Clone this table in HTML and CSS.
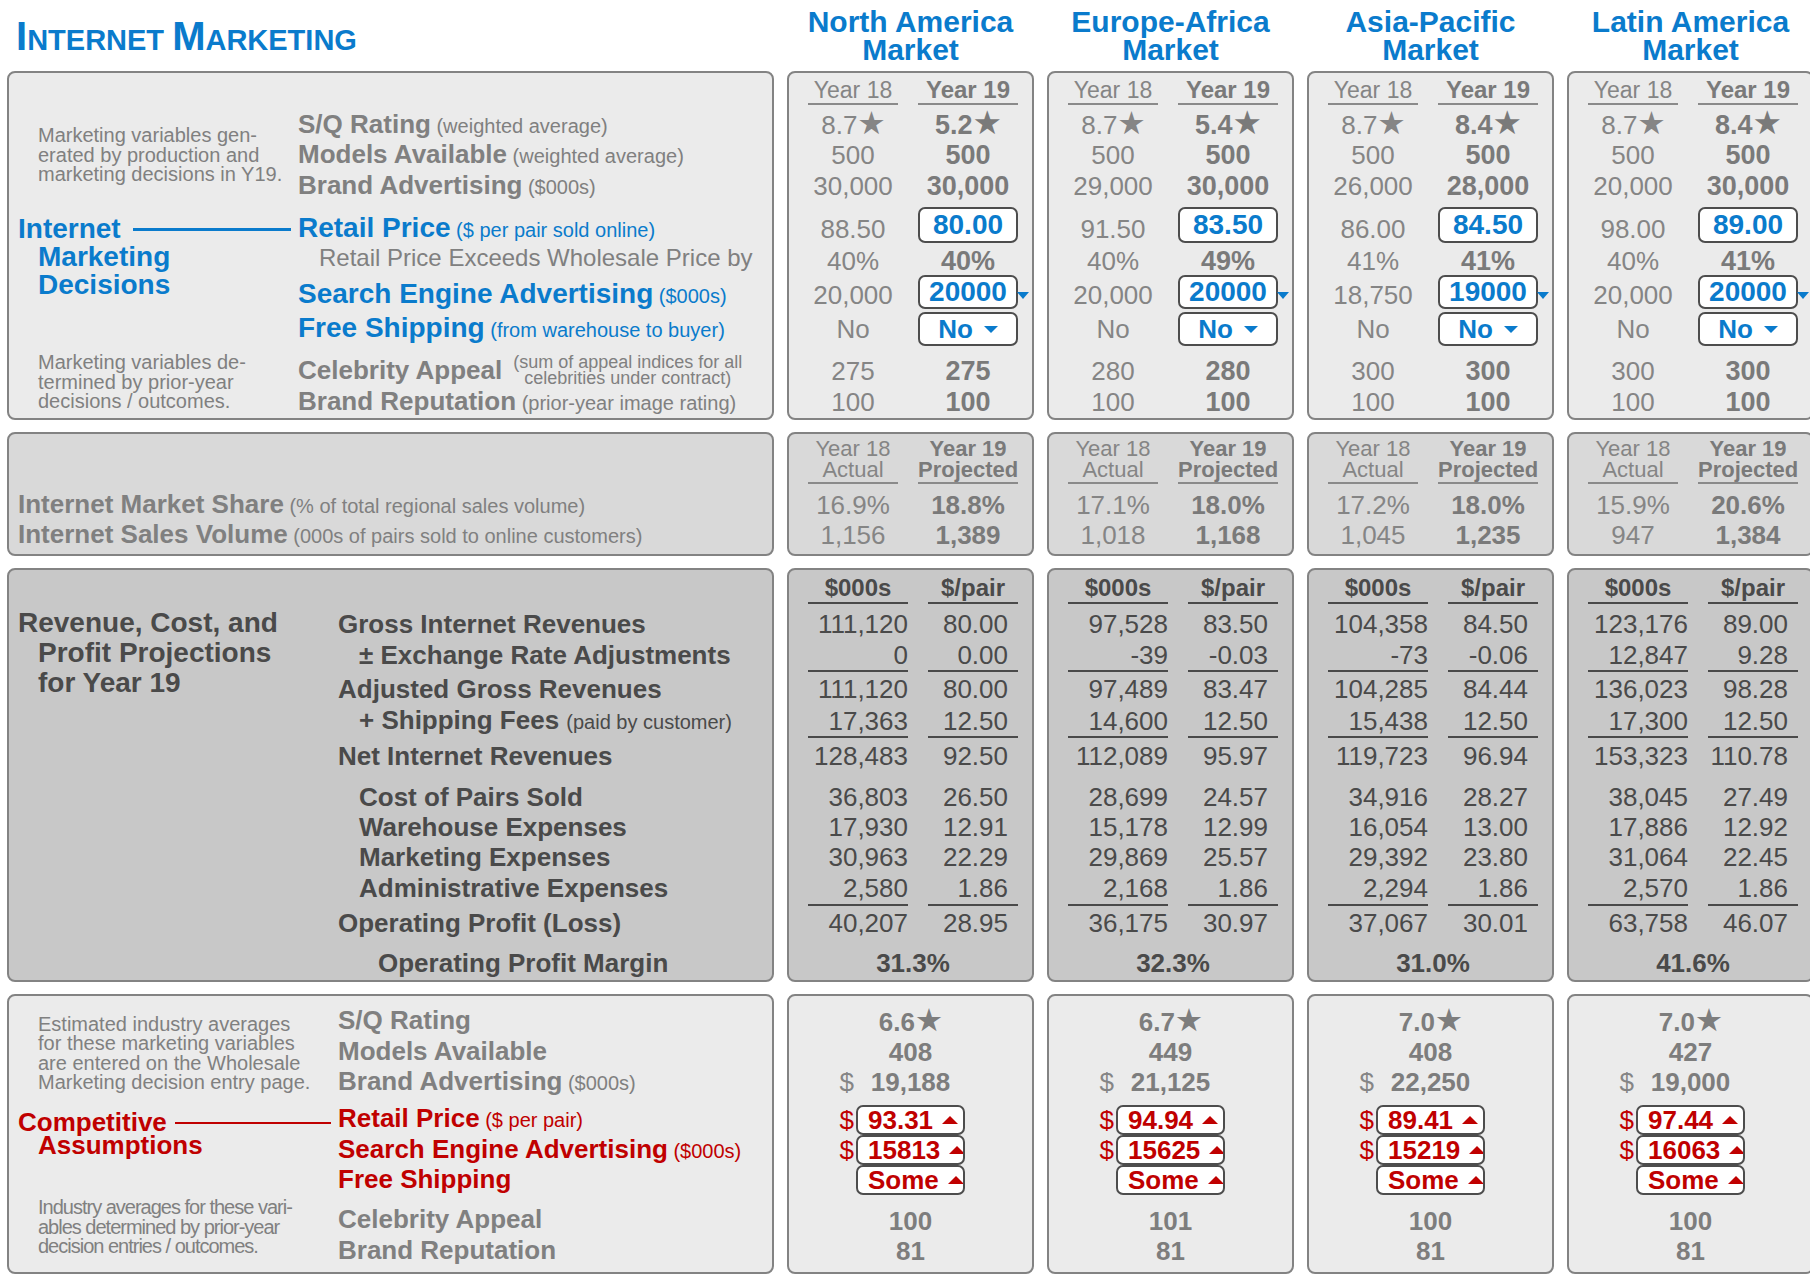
FILE: index.html
```html
<!DOCTYPE html>
<html lang="en">
<head>
<meta charset="utf-8">
<title>Internet Marketing</title>
<link rel="stylesheet" href="styles.css">
</head>
<body>
<div class="page">
  <div class="title"><span class="cap">I</span>NTERNET <span class="cap">M</span>ARKETING</div>
  <div class="mtitle">North America<br>Market</div>
  <div class="mtitle">Europe-Africa<br>Market</div>
  <div class="mtitle">Asia-Pacific<br>Market</div>
  <div class="mtitle">Latin America<br>Market</div>

  <!-- ===== Decisions panel ===== -->
  <div class="panel light dec left">
    <div class="desc dec-d1">Marketing variables gen-<br>erated by production and<br>marketing decisions in Y19.</div>
    <div class="head blue dec-h"><div class="hl"><span>Internet</span><i class="rule"></i></div><div class="ind">Marketing</div><div class="ind">Decisions</div></div>
    <div class="desc dec-d2">Marketing variables de-<br>termined by prior-year<br>decisions / outcomes.</div>
    <div class="lab gc2 gr2"><b>S/Q Rating</b> (weighted average)</div>
    <div class="lab gc2 gr3"><b>Models Available</b> (weighted average)</div>
    <div class="lab gc2 gr4"><b>Brand Advertising</b> ($000s)</div>
    <div class="lab blue gc2 gr5 dn4"><b>Retail Price</b> ($ per pair sold online)</div>
    <div class="lab plain gc2 gr6 up3">Retail Price Exceeds Wholesale Price by</div>
    <div class="lab blue gc2 gr7 dn3"><b>Search Engine Advertising</b> ($000s)</div>
    <div class="lab blue gc2 gr8"><b>Free Shipping</b> (from warehouse to buyer)</div>
    <div class="lab celeb gc2 gr9"><b>Celebrity Appeal</b><span class="note">(sum of appeal indices for all<br>celebrities under contract)</span></div>
    <div class="lab gc2 gr10"><b>Brand Reputation</b> (prior-year image rating)</div>
  </div>

  <div class="panel light dec mk">
    <div class="hd">Year 18</div><div class="hd hb">Year 19</div>
    <div class="c">8.7<span class="st">★</span></div><div class="c cb">5.2<span class="st">★</span></div>
    <div class="c">500</div><div class="c cb">500</div>
    <div class="c">30,000</div><div class="c cb">30,000</div>
    <div class="c dn4">88.50</div><div class="c"><div class="inbox">80.00</div></div>
    <div class="c">40%</div><div class="c cb">40%</div>
    <div class="c dn3">20,000</div><div class="c"><div class="inbox h34">20000<i class="dtri out"></i></div></div>
    <div class="c">No</div><div class="c"><div class="inbox h34 no">No<i class="dtri"></i></div></div>
    <div class="c end">275</div><div class="c cb end">275</div>
    <div class="c">100</div><div class="c cb">100</div>
  </div>

  <div class="panel light dec mk">
    <div class="hd">Year 18</div><div class="hd hb">Year 19</div>
    <div class="c">8.7<span class="st">★</span></div><div class="c cb">5.4<span class="st">★</span></div>
    <div class="c">500</div><div class="c cb">500</div>
    <div class="c">29,000</div><div class="c cb">30,000</div>
    <div class="c dn4">91.50</div><div class="c"><div class="inbox">83.50</div></div>
    <div class="c">40%</div><div class="c cb">49%</div>
    <div class="c dn3">20,000</div><div class="c"><div class="inbox h34">20000<i class="dtri out"></i></div></div>
    <div class="c">No</div><div class="c"><div class="inbox h34 no">No<i class="dtri"></i></div></div>
    <div class="c end">280</div><div class="c cb end">280</div>
    <div class="c">100</div><div class="c cb">100</div>
  </div>

  <div class="panel light dec mk">
    <div class="hd">Year 18</div><div class="hd hb">Year 19</div>
    <div class="c">8.7<span class="st">★</span></div><div class="c cb">8.4<span class="st">★</span></div>
    <div class="c">500</div><div class="c cb">500</div>
    <div class="c">26,000</div><div class="c cb">28,000</div>
    <div class="c dn4">86.00</div><div class="c"><div class="inbox">84.50</div></div>
    <div class="c">41%</div><div class="c cb">41%</div>
    <div class="c dn3">18,750</div><div class="c"><div class="inbox h34">19000<i class="dtri out"></i></div></div>
    <div class="c">No</div><div class="c"><div class="inbox h34 no">No<i class="dtri"></i></div></div>
    <div class="c end">300</div><div class="c cb end">300</div>
    <div class="c">100</div><div class="c cb">100</div>
  </div>

  <div class="panel light dec mk">
    <div class="hd">Year 18</div><div class="hd hb">Year 19</div>
    <div class="c">8.7<span class="st">★</span></div><div class="c cb">8.4<span class="st">★</span></div>
    <div class="c">500</div><div class="c cb">500</div>
    <div class="c">20,000</div><div class="c cb">30,000</div>
    <div class="c dn4">98.00</div><div class="c"><div class="inbox">89.00</div></div>
    <div class="c">40%</div><div class="c cb">41%</div>
    <div class="c dn3">20,000</div><div class="c"><div class="inbox h34">20000<i class="dtri out"></i></div></div>
    <div class="c">No</div><div class="c"><div class="inbox h34 no">No<i class="dtri"></i></div></div>
    <div class="c end">300</div><div class="c cb end">300</div>
    <div class="c">100</div><div class="c cb">100</div>
  </div>

  <!-- ===== Market share panel ===== -->
  <div class="panel mid share left1">
    <div class="lab gr2"><b>Internet Market Share</b> (% of total regional sales volume)</div>
    <div class="lab gr3"><b>Internet Sales Volume</b> (000s of pairs sold to online customers)</div>
  </div>

  <div class="panel mid share mk">
    <div class="hd hd2">Year 18<br>Actual</div><div class="hd hd2 hb">Year 19<br>Projected</div>
    <div class="c">16.9%</div><div class="c cb2">18.8%</div>
    <div class="c">1,156</div><div class="c cb2">1,389</div>
  </div>
  <div class="panel mid share mk">
    <div class="hd hd2">Year 18<br>Actual</div><div class="hd hd2 hb">Year 19<br>Projected</div>
    <div class="c">17.1%</div><div class="c cb2">18.0%</div>
    <div class="c">1,018</div><div class="c cb2">1,168</div>
  </div>
  <div class="panel mid share mk">
    <div class="hd hd2">Year 18<br>Actual</div><div class="hd hd2 hb">Year 19<br>Projected</div>
    <div class="c">17.2%</div><div class="c cb2">18.0%</div>
    <div class="c">1,045</div><div class="c cb2">1,235</div>
  </div>
  <div class="panel mid share mk">
    <div class="hd hd2">Year 18<br>Actual</div><div class="hd hd2 hb">Year 19<br>Projected</div>
    <div class="c">15.9%</div><div class="c cb2">20.6%</div>
    <div class="c">947</div><div class="c cb2">1,384</div>
  </div>

  <!-- ===== Projections panel ===== -->
  <div class="panel dark proj left wide">
    <div class="head rev proj-h">Revenue, Cost, and<div class="ind">Profit Projections</div><div class="ind">for Year 19</div></div>
    <div class="pl gr2"><span>Gross Internet Revenues</span></div>
    <div class="pl sub gr3"><span>± Exchange Rate Adjustments</span></div>
    <div class="pl tlx gr4"><span>Adjusted Gross Revenues</span></div>
    <div class="pl sub gr5"><span>+ Shipping Fees <small>(paid by customer)</small></span></div>
    <div class="pl tlx gr6"><span>Net Internet Revenues</span></div>
    <div class="pl sub end gr7"><span>Cost of Pairs Sold</span></div>
    <div class="pl sub gr8"><span>Warehouse Expenses</span></div>
    <div class="pl sub gr9"><span>Marketing Expenses</span></div>
    <div class="pl sub gr10"><span>Administrative Expenses</span></div>
    <div class="pl tlx gr11"><span>Operating Profit (Loss)</span></div>
    <div class="pl sub2 end pb2 gr12"><span>Operating Profit Margin</span></div>
  </div>

  <div class="panel dark proj mk rev">
    <div class="ph">$000s</div><div class="ph">$/pair</div>
    <div class="pv">111,120</div><div class="pv pr">80.00</div>
    <div class="pv">0</div><div class="pv pr">0.00</div>
    <div class="pv tl">111,120</div><div class="pv pr tl">80.00</div>
    <div class="pv">17,363</div><div class="pv pr">12.50</div>
    <div class="pv tl">128,483</div><div class="pv pr tl">92.50</div>
    <div class="pv end">36,803</div><div class="pv pr end">26.50</div>
    <div class="pv">17,930</div><div class="pv pr">12.91</div>
    <div class="pv">30,963</div><div class="pv pr">22.29</div>
    <div class="pv">2,580</div><div class="pv pr">1.86</div>
    <div class="pv tl">40,207</div><div class="pv pr tl">28.95</div>
    <div class="pv pm">31.3%</div>
  </div>
  <div class="panel dark proj mk rev">
    <div class="ph">$000s</div><div class="ph">$/pair</div>
    <div class="pv">97,528</div><div class="pv pr">83.50</div>
    <div class="pv">-39</div><div class="pv pr">-0.03</div>
    <div class="pv tl">97,489</div><div class="pv pr tl">83.47</div>
    <div class="pv">14,600</div><div class="pv pr">12.50</div>
    <div class="pv tl">112,089</div><div class="pv pr tl">95.97</div>
    <div class="pv end">28,699</div><div class="pv pr end">24.57</div>
    <div class="pv">15,178</div><div class="pv pr">12.99</div>
    <div class="pv">29,869</div><div class="pv pr">25.57</div>
    <div class="pv">2,168</div><div class="pv pr">1.86</div>
    <div class="pv tl">36,175</div><div class="pv pr tl">30.97</div>
    <div class="pv pm">32.3%</div>
  </div>
  <div class="panel dark proj mk rev">
    <div class="ph">$000s</div><div class="ph">$/pair</div>
    <div class="pv">104,358</div><div class="pv pr">84.50</div>
    <div class="pv">-73</div><div class="pv pr">-0.06</div>
    <div class="pv tl">104,285</div><div class="pv pr tl">84.44</div>
    <div class="pv">15,438</div><div class="pv pr">12.50</div>
    <div class="pv tl">119,723</div><div class="pv pr tl">96.94</div>
    <div class="pv end">34,916</div><div class="pv pr end">28.27</div>
    <div class="pv">16,054</div><div class="pv pr">13.00</div>
    <div class="pv">29,392</div><div class="pv pr">23.80</div>
    <div class="pv">2,294</div><div class="pv pr">1.86</div>
    <div class="pv tl">37,067</div><div class="pv pr tl">30.01</div>
    <div class="pv pm">31.0%</div>
  </div>
  <div class="panel dark proj mk rev">
    <div class="ph">$000s</div><div class="ph">$/pair</div>
    <div class="pv">123,176</div><div class="pv pr">89.00</div>
    <div class="pv">12,847</div><div class="pv pr">9.28</div>
    <div class="pv tl">136,023</div><div class="pv pr tl">98.28</div>
    <div class="pv">17,300</div><div class="pv pr">12.50</div>
    <div class="pv tl">153,323</div><div class="pv pr tl">110.78</div>
    <div class="pv end">38,045</div><div class="pv pr end">27.49</div>
    <div class="pv">17,886</div><div class="pv pr">12.92</div>
    <div class="pv">31,064</div><div class="pv pr">22.45</div>
    <div class="pv">2,570</div><div class="pv pr">1.86</div>
    <div class="pv tl">63,758</div><div class="pv pr tl">46.07</div>
    <div class="pv pm">41.6%</div>
  </div>

  <!-- ===== Competitive assumptions panel ===== -->
  <div class="panel light comp left wide">
    <div class="desc comp-d1">Estimated industry averages<br>for these marketing variables<br>are entered on the Wholesale<br>Marketing decision entry page.</div>
    <div class="head red comp-h"><div class="hl"><span>Competitive</span><i class="rule"></i></div><div class="ind">Assumptions</div></div>
    <div class="desc tight comp-d2">Industry averages for these vari-<br>ables determined by prior-year<br>decision entries / outcomes.</div>
    <div class="lab gc2 gr1 end"><b>S/Q Rating</b></div>
    <div class="lab gc2 gr2"><b>Models Available</b></div>
    <div class="lab gc2 gr3"><b>Brand Advertising</b> ($000s)</div>
    <div class="lab red gc2 gr4 end"><b>Retail Price</b> ($ per pair)</div>
    <div class="lab red gc2 gr5"><b>Search Engine Advertising</b> ($000s)</div>
    <div class="lab red gc2 gr6"><b>Free Shipping</b></div>
    <div class="lab gc2 gr7 end"><b>Celebrity Appeal</b></div>
    <div class="lab gc2 gr8"><b>Brand Reputation</b></div>
  </div>

  <div class="panel light comp one">
    <div class="c b4 mid2 end">6.6<span class="st">★</span></div>
    <div class="c b4 mid2">408</div>
    <div class="c dol">$</div><div class="c b4 mid2">19,188</div>
    <div class="c dol redc end">$</div><div class="c mid2 end"><div class="rbox">93.31<i class="utri"></i></div></div>
    <div class="c dol redc">$</div><div class="c mid2"><div class="rbox">15813<i class="utri"></i></div></div>
    <div class="c mid2"><div class="rbox">Some<i class="utri"></i></div></div>
    <div class="c b4 mid2 end">100</div>
    <div class="c b4 mid2">81</div>
  </div>
  <div class="panel light comp one">
    <div class="c b4 mid2 end">6.7<span class="st">★</span></div>
    <div class="c b4 mid2">449</div>
    <div class="c dol">$</div><div class="c b4 mid2">21,125</div>
    <div class="c dol redc end">$</div><div class="c mid2 end"><div class="rbox">94.94<i class="utri"></i></div></div>
    <div class="c dol redc">$</div><div class="c mid2"><div class="rbox">15625<i class="utri"></i></div></div>
    <div class="c mid2"><div class="rbox">Some<i class="utri"></i></div></div>
    <div class="c b4 mid2 end">101</div>
    <div class="c b4 mid2">81</div>
  </div>
  <div class="panel light comp one">
    <div class="c b4 mid2 end">7.0<span class="st">★</span></div>
    <div class="c b4 mid2">408</div>
    <div class="c dol">$</div><div class="c b4 mid2">22,250</div>
    <div class="c dol redc end">$</div><div class="c mid2 end"><div class="rbox">89.41<i class="utri"></i></div></div>
    <div class="c dol redc">$</div><div class="c mid2"><div class="rbox">15219<i class="utri"></i></div></div>
    <div class="c mid2"><div class="rbox">Some<i class="utri"></i></div></div>
    <div class="c b4 mid2 end">100</div>
    <div class="c b4 mid2">81</div>
  </div>
  <div class="panel light comp one">
    <div class="c b4 mid2 end">7.0<span class="st">★</span></div>
    <div class="c b4 mid2">427</div>
    <div class="c dol">$</div><div class="c b4 mid2">19,000</div>
    <div class="c dol redc end">$</div><div class="c mid2 end"><div class="rbox">97.44<i class="utri"></i></div></div>
    <div class="c dol redc">$</div><div class="c mid2"><div class="rbox">16063<i class="utri"></i></div></div>
    <div class="c mid2"><div class="rbox">Some<i class="utri"></i></div></div>
    <div class="c b4 mid2 end">100</div>
    <div class="c b4 mid2">81</div>
  </div>
</div>
</body>
</html>
```

FILE: styles.css
```css
* { box-sizing: border-box; margin: 0; padding: 0; }
html, body { overflow: hidden; background: #fff; }
body {
  font-family: "Liberation Sans", Arial, Helvetica, sans-serif;
  color: #808080;
  width: 1810px;
  height: 1274px;
}

.page {
  display: grid;
  grid-template-columns: 767px repeat(4, 247px);
  grid-template-rows: 59px 349px 124px 414px 280px;
  column-gap: 13px;
  row-gap: 12px;
  margin-left: 7px;
  width: 1814px;
}

.title {
  color: #0a7bcc;
  font-weight: bold;
  font-size: 29px;
  line-height: 40px;
  padding: 16px 0 0 9px;
  white-space: nowrap;
}
.title .cap { font-size: 40px; }

.mtitle {
  color: #0a7bcc;
  font-weight: bold;
  font-size: 30px;
  line-height: 28px;
  text-align: center;
  padding-top: 8px;
  white-space: nowrap;
}

/* panels */
.panel {
  border: 2px solid #838383;
  border-radius: 8px;
  display: grid;
}
.light { background: #ebebeb; }
.mid { background: #d9d9d9; }
.dark { background: #c8c8c8; color: #4a4a4a; }

.dec { grid-template-rows: 37px 30px 30px 31px 48px 24px 38px 36px 39px 32px; }
.share { grid-template-rows: 55px 32px 28px; }
.proj { grid-template-rows: 38px 32px 30px 36px 30px 38px 38px 30px 30px 32px 36px 40px; }
.comp { grid-template-rows: 41px 30px 30px 38px 30px 30px 41px 30px; }

.left { grid-template-columns: 289px 1fr; }
.left.wide { grid-template-columns: 329px 1fr; }
.left1 { grid-template-columns: 1fr; padding-left: 9px; }

.mk { grid-template-columns: 90px 100px; column-gap: 20px; padding-left: 19px; }
.mk.rev { grid-template-columns: 100px 90px; }
.one { grid-template-columns: 1fr auto 1fr; }

/* placement helpers */
.gc2 { grid-column: 2; }
.gr1 { grid-row: 1; }
.gr2 { grid-row: 2; }
.gr3 { grid-row: 3; }
.gr4 { grid-row: 4; }
.gr5 { grid-row: 5; }
.gr6 { grid-row: 6; }
.gr7 { grid-row: 7; }
.gr8 { grid-row: 8; }
.gr9 { grid-row: 9; }
.gr10 { grid-row: 10; }
.gr11 { grid-row: 11; }
.gr12 { grid-row: 12; }
.pl { grid-column: 2; }

.dec-d1 { grid-column: 1; grid-row: 2 / 5; }
.dec-h { grid-column: 1; grid-row: 5 / 8; }
.dec-d2 { grid-column: 1; grid-row: 9 / 11; }
.proj-h { grid-column: 1; grid-row: 2 / 6; }
.comp-d1 { grid-column: 1; grid-row: 1 / 4; align-self: start; padding-top: 14px; }
.comp-h { grid-column: 1; grid-row: 4 / 7; }
.comp-d2 { grid-column: 1; grid-row: 7 / 9; align-self: end; padding-bottom: 6px; }

/* left descriptions and headings */
.desc {
  font-size: 20px;
  line-height: 19.5px;
  padding-left: 29px;
  align-self: center;
  white-space: nowrap;
  color: #808080;
}
.desc.tight { letter-spacing: -1px; }

.head {
  font-weight: bold;
  align-self: start;
  padding: 14px 0 0 9px;
  white-space: nowrap;
}
.head.blue { color: #0a7bcc; font-size: 28px; line-height: 28px; }
.head.red { color: #c00000; font-size: 26px; line-height: 23px; }
.head.rev { font-size: 28px; line-height: 30px; padding-top: 0; color: #4a4a4a; }
.hl { display: flex; align-items: center; }
.rule { flex: 1; height: 3px; background: #0a7bcc; margin: 0 7px 0 12px; }
.red .rule { height: 2px; background: #c00000; margin-left: 8px; }
.ind { padding-left: 20px; }

/* labels */
.lab {
  align-self: center;
  line-height: 30px;
  font-size: 20px;
  white-space: nowrap;
}
.lab b { font-size: 26px; }
.lab.blue { color: #0a7bcc; }
.lab.blue b { font-size: 28px; }
.lab.red { color: #c00000; }
.lab.plain { font-size: 24px; padding-left: 21px; }
.lab.celeb { display: flex; align-items: center; align-self: end; }
.note {
  display: block;
  font-size: 18px;
  line-height: 16px;
  text-align: center;
  margin-left: 11px;
}

/* values */
.c {
  align-self: center;
  text-align: center;
  line-height: 30px;
  font-size: 26px;
  white-space: nowrap;
  color: #858585;
}
.cb { font-weight: bold; font-size: 27px; color: #7a7a7a; }
.cb2 { font-weight: bold; color: #7a7a7a; }
.b4 { font-weight: bold; color: #7d7d7d; }
.end { align-self: end; }
.dn4 { margin-top: 8px; }
.dn3 { margin-top: 6px; }
.up3 { margin-bottom: 6px; }
.st {
  font-family: "DejaVu Sans", sans-serif;
  font-size: 1.22em;
  line-height: 20px;
  font-weight: normal;
  letter-spacing: -1px;
}

.hd {
  align-self: start;
  margin-top: 4px;
  line-height: 26px;
  font-size: 23px;
  text-align: center;
  border-bottom: 2px solid #8a8a8a;
  white-space: nowrap;
  color: #858585;
}
.hb { font-weight: bold; font-size: 24px; color: #7a7a7a; }
.hd2 { line-height: 21px; font-size: 22px; padding-bottom: 2px; }
.hd2.hb { font-size: 22px; }

.inbox {
  position: relative;
  display: flex;
  align-items: center;
  justify-content: center;
  height: 36px;
  border: 2px solid #4d4d4d;
  border-radius: 7px;
  background: #fff;
  color: #0a7bcc;
  font-weight: bold;
  font-size: 28px;
  line-height: 30px;
}
.inbox.h34 { height: 34px; }
.inbox.no { font-size: 26px; }
.dtri {
  display: inline-block;
  width: 0;
  height: 0;
  border-left: 7px solid transparent;
  border-right: 7px solid transparent;
  border-top: 7px solid #0a7bcc;
  margin-left: 11px;
}
.dtri.out {
  position: absolute;
  left: 100%;
  top: 15px;
  margin-left: 1px;
  border-left-width: 6px;
  border-right-width: 6px;
}

/* projections */
.ph {
  align-self: start;
  margin-top: 4px;
  line-height: 28px;
  font-size: 24px;
  font-weight: bold;
  text-align: center;
  border-bottom: 2px solid #4a4a4a;
}
.pv {
  display: flex;
  align-items: center;
  justify-content: flex-end;
  font-size: 26px;
  line-height: 30px;
  white-space: nowrap;
}
.pr { padding-right: 10px; }
.tl { border-top: 2px solid #4a4a4a; }
.tlx { border-top: 2px solid transparent; }
.pv.end, .pl.end { align-items: flex-end; align-self: stretch; }
.pm {
  grid-column: 1 / 3;
  justify-content: center;
  align-items: flex-end;
  padding-bottom: 2px;
  font-weight: bold;
}
.pl {
  display: flex;
  align-items: center;
  font-size: 26px;
  line-height: 30px;
  font-weight: bold;
  white-space: nowrap;
}
.pl small { font-size: 20px; font-weight: normal; }
.pl.sub { padding-left: 21px; }
.pl.sub2 { padding-left: 40px; }
.pb2 { padding-bottom: 2px; }

/* competitive */
.mid2 { grid-column: 2; }
.dol {
  grid-column: 1;
  text-align: right;
  padding-right: 2px;
  font-weight: normal;
}
.redc { color: #c00000; }
.rbox {
  display: flex;
  align-items: center;
  width: 109px;
  height: 30px;
  border: 2px solid #4d4d4d;
  border-radius: 7px;
  background: #fff;
  color: #c00000;
  font-weight: bold;
  font-size: 26px;
  line-height: 26px;
  padding-left: 10px;
  overflow: hidden;
}
.utri {
  flex: none;
  width: 0;
  height: 0;
  border-left: 8px solid transparent;
  border-right: 8px solid transparent;
  border-bottom: 8px solid #c00000;
  margin-left: 9px;
}
```
